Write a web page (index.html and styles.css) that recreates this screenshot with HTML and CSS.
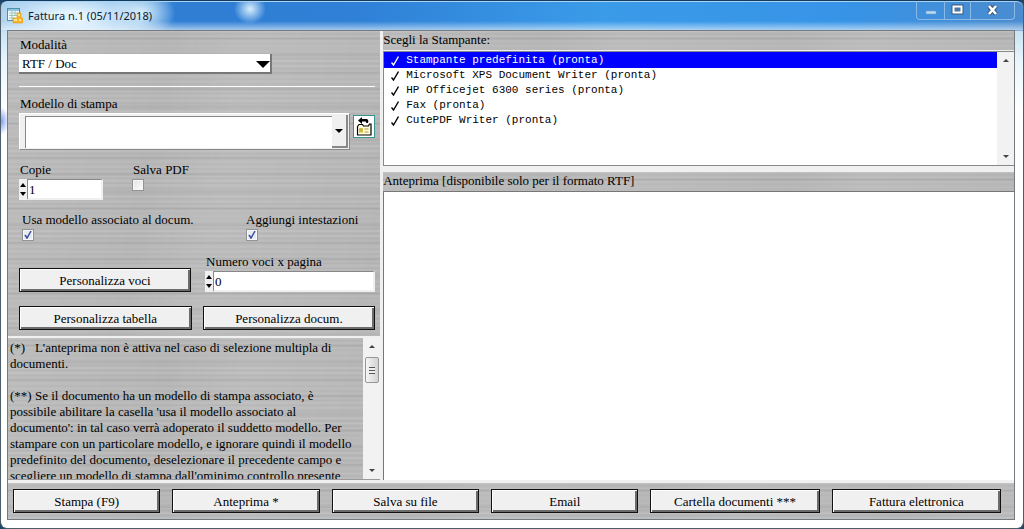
FILE: index.html
```html
<!DOCTYPE html>
<html lang="it">
<head>
<meta charset="utf-8">
<title>Fattura n.1 (05/11/2018)</title>
<link rel="stylesheet" href="styles.css">
</head>
<body>
<div class="window">
  <header class="titlebar">
    <svg class="app-icon" width="16" height="16" viewBox="0 0 16 16" aria-hidden="true">
      <rect x="0.500" y="0.500" width="12" height="12" fill="#f6fcff" stroke="#4d8fae"/>
      <path d="M1 2h11" stroke="#8fc4dc" stroke-width="2"/>
      <path d="M2 5h9M2 7.500h8M2 10h6M5 3v9M8 3v5" stroke="#9cc4b8"/>
      <path d="M10 5h4v5h2v5H6v-5h4z" fill="#f5b62c" stroke="#e39a20" stroke-width=".6"/>
      <path d="M11 6h2v2h-2zM7 11h3v2H7zM12 11h2v2h-2z" fill="#ffe48a"/>
    </svg>
    <h1 class="title">Fattura n.1 (05/11/2018)</h1>
    <div class="win-buttons">
      <button class="win-btn" aria-label="Riduci a icona"><svg width="27" height="18" viewBox="0 0 27 18"><rect x="9" y="10" width="10" height="3" fill="#b9d9f3" stroke="#6d9cc8" stroke-width=".5"/></svg></button>
      <button class="win-btn" aria-label="Ingrandisci"><svg width="25" height="18" viewBox="0 0 25 18"><rect x="8.500" y="5.500" width="8" height="6" fill="#5d7fa6" stroke="#3d5878" stroke-width="4"/><rect x="8.500" y="5.500" width="8" height="6" fill="#4a76a8" stroke="#fff" stroke-width="2"/></svg></button>
      <button class="win-btn win-close" aria-label="Chiudi"><svg width="43" height="18" viewBox="0 0 43 18"><path d="M18 5l7 8M25 5l-7 8" stroke="#3d5878" stroke-width="4.500"/><path d="M18 5l7 8M25 5l-7 8" stroke="#fff" stroke-width="2.600"/></svg></button>
    </div>
  </header>

  <main class="client">
    <div class="panes">
      <div class="left">
        <form class="options metal">
          <div class="field">
            <label for="mode">Modalità</label>
            <span class="mode-box"><select id="mode" class="mode"><option>RTF / Doc</option></select></span>
          </div>
          <hr class="rule">
          <div class="field model-field">
            <label for="model">Modello di stampa</label>
            <div class="model-row">
              <span class="model-box"><select id="model" class="model"><option></option></select><span class="drop" aria-hidden="true"></span></span>
              <button type="button" class="tool" aria-label="Apri modello">
                <svg width="20" height="20" viewBox="0 0 20 20" aria-hidden="true">
                  <path d="M4 3.500L8 0v2h5q2 1 1 4h-2q1-2-1-1.500H8v2.500z" fill="#000"/>
                  <path d="M3.500 9.500l1.500-2h3.500l1 1.500h5l1-2h1.500v11h-13.500z" fill="#fffce0" stroke="#000" stroke-width="1.200"/>
                  <path d="M5 11h4v5H5z" fill="#efe070"/>
                  <path d="M6 15v-3h2v3M10.500 12h4M10.500 15h4" fill="none" stroke="#b5a02c" stroke-width="1.200"/>
                </svg>
              </button>
            </div>
          </div>
          <div class="pair copies">
            <div class="field">
              <label for="copies">Copie</label>
              <div class="spin">
                <span class="spin-buttons"><button type="button" class="up" aria-label="Aumenta copie"></button><button type="button" class="down" aria-label="Diminuisci copie"></button></span>
                <input id="copies" type="text" inputmode="numeric" value="1">
              </div>
            </div>
            <div class="field">
              <label for="pdf">Salva PDF</label>
              <input id="pdf" class="check" type="checkbox">
            </div>
          </div>
          <div class="pair flags">
            <div class="field">
              <label for="assoc">Usa modello associato al docum.</label>
              <input id="assoc" class="check" type="checkbox" checked>
            </div>
            <div class="field">
              <label for="heads">Aggiungi intestazioni</label>
              <input id="heads" class="check" type="checkbox" checked>
            </div>
          </div>
          <div class="pair actions">
            <button type="button" class="btn">Personalizza voci</button>
            <div class="field">
              <label for="rows">Numero voci x pagina</label>
              <div class="spin">
                <span class="spin-buttons"><button type="button" class="up" aria-label="Aumenta voci"></button><button type="button" class="down" aria-label="Diminuisci voci"></button></span>
                <input id="rows" type="text" inputmode="numeric" value="0">
              </div>
            </div>
          </div>
          <div class="pair custom">
            <button type="button" class="btn">Personalizza tabella</button>
            <button type="button" class="btn">Personalizza docum.</button>
          </div>
        </form>

        <section class="info metal">
          <div class="info-text">
            <p>(*) &nbsp; L'anteprima non è attiva nel caso di selezione multipla di<br>documenti.</p>
            <p>(**) Se il documento ha un modello di stampa associato, è<br>possibile abilitare la casella 'usa il modello associato al<br>documento': in tal caso verrà adoperato il suddetto modello. Per<br>stampare con un particolare modello, e ignorare quindi il modello<br>predefinito del documento, deselezionare il precedente campo e<br>scegliere un modello di stampa dall'ominimo controllo presente</p>
          </div>
          <div class="scrollbar" aria-hidden="true"><i class="arrow-up"></i><i class="thumb"></i><i class="arrow-down"></i></div>
        </section>
      </div>

      <div class="right">
        <h2 class="caption metal" id="printers">Scegli la Stampante:</h2>
        <div class="printers">
          <ul class="list" role="listbox" aria-labelledby="printers">
            <li role="option" aria-selected="true" class="selected"><svg width="8" height="10" viewBox="0 0 8 10"><path d="M.500 6.500L2.500 9 7.500.500" /></svg>Stampante predefinita (pronta)</li>
            <li role="option"><svg width="8" height="10" viewBox="0 0 8 10"><path d="M.500 6.500L2.500 9 7.500.500" /></svg>Microsoft XPS Document Writer (pronta)</li>
            <li role="option"><svg width="8" height="10" viewBox="0 0 8 10"><path d="M.500 6.500L2.500 9 7.500.500" /></svg>HP Officejet 6300 series (pronta)</li>
            <li role="option"><svg width="8" height="10" viewBox="0 0 8 10"><path d="M.500 6.500L2.500 9 7.500.500" /></svg>Fax (pronta)</li>
            <li role="option"><svg width="8" height="10" viewBox="0 0 8 10"><path d="M.500 6.500L2.500 9 7.500.500" /></svg>CutePDF Writer (pronta)</li>
          </ul>
          <div class="scrollbar" aria-hidden="true"><i class="arrow-up"></i><i class="arrow-down"></i></div>
        </div>
        <h2 class="caption metal">Anteprima [disponibile solo per il formato RTF]</h2>
        <div class="preview"></div>
      </div>
    </div>

    <footer class="toolbar metal">
      <button class="btn">Stampa (F9)</button>
      <button class="btn">Anteprima *</button>
      <button class="btn">Salva su file</button>
      <button class="btn">Email</button>
      <button class="btn">Cartella documenti ***</button>
      <button class="btn">Fattura elettronica</button>
    </footer>
  </main>
</div>
</body>
</html>
```
FILE: styles.css
```css
* { box-sizing: border-box; }

body {
  margin: 0;
  background: #1d4668;
  font: 13px/16px "Liberation Serif", "Times New Roman", serif;
  color: #000;
}

button, input, select { font: inherit; color: inherit; margin: 0; padding: 0; border-radius: 0; }

.window {
  display: flex;
  flex-direction: column;
  height: 100vh;
  padding: 0 8px 8px 6px;
  border: 1px solid #4c5c68;
  border-top-color: #143a5c;
  border-radius: 7px;
  box-shadow: inset 0 1px 0 #a9d3f5;
  background:
    linear-gradient(#0000 20px, #ffffff90 29px, #0000 30px),
    radial-gradient(ellipse 16px 15px at 249px 8px, #d8eefc, #0000),
    radial-gradient(ellipse 34px 24px at 140px 12px, #d9eefb, #0000),
    radial-gradient(ellipse 80px 26px at 70px 16px, #e4f4ff 20%, #0000),
    linear-gradient(90deg, #a6cdec 0, #8cc0ea 120px, #2f7ed4 175px, #2f80d6 350px, #3a9be9 600px, #3793e6 850px, #4a8cd0 100%) 0 0 / 100% 30px no-repeat,
    radial-gradient(ellipse 8px 14px at 0 120px, #7d9cf5, #0000),
    linear-gradient(#a9cdea, #e9f6fd 60px, #fff 110px, #fff);
}

.titlebar { display: flex; align-items: center; height: 29px; flex: none; }
.app-icon { flex: none; margin-right: 5px; }
.title { flex: 1; margin: 0; font: 11px/16px "Noto Sans", "Open Sans", sans-serif; color: #10202c; }
.win-buttons {
  display: flex;
  align-self: flex-start;
  border: 1px solid #8bb9e4;
  border-top: 0;
  border-radius: 0 0 4px 4px;
}
.win-btn { display: flex; height: 18px; border: 0; background: none; border-right: 1px solid #8bb9e4; }
.win-close { border-right: 0; }

.metal {
  background:
    repeating-linear-gradient(#ffffff10 0 1px, #0000 2px 6px, #0000000c 7px 8px, #0000 9px 12px, #ffffff14 13px, #0000 14px 17px),
    repeating-linear-gradient(100deg, #ffffff0c 0, #0000 90px, #00000004 160px, #ffffff0c 240px),
    repeating-linear-gradient(#bcbcbc 0 1px, #b4b4b4 2px 3px, #bababa 4px 5px);
}

.client {
  flex: 1;
  min-height: 0;
  display: flex;
  flex-direction: column;
  border: 1px solid #737b80;
  background: #f0f0f0;
}
.panes { flex: 1; min-height: 0; display: grid; grid-template-columns: 37% minmax(0, 1fr); gap: 3px; }
.left, .right { display: flex; flex-direction: column; min-height: 0; }

.options { flex: none; display: flex; flex-direction: column; padding: 5px 5px 6px 11px; }
.field { display: flex; flex-direction: column; align-items: flex-start; gap: 1px; }
.field label { padding-left: 1px; line-height: 17px; }
.rule { width: 100%; height: 1px; margin: 12px 0 8px; border: 0; background: #fafafa; }

.mode-box { position: relative; display: block; width: 71%; height: 20px; }
.mode-box::after {
  content: "";
  position: absolute;
  right: 2px;
  top: 7px;
  border: 7px solid transparent;
  border-top-color: #000;
  border-bottom: 0;
  pointer-events: none;
}
.mode {
  appearance: none;
  display: block;
  width: 100%;
  height: 20px;
  padding: 1px 3px 0;
  background: #fff;
  border: solid #777;
  border-width: 0 2px 2px 0;
}

.model-row { display: flex; gap: 3px; width: 100%; }
.model-box {
  position: relative;
  flex: 1;
  display: block;
  height: 37px;
  padding: 2px 1px 2px 5px;
  background: #f0f0f0;
  border: 1px solid #fff;
  border-right-color: #888;
  border-bottom-color: #888;
}
.model { appearance: none; display: block; width: 100%; height: 32px; background: #fff; border: solid #888; border-width: 1px 0 0 1px; }
.drop {
  position: absolute;
  right: 1px;
  top: 1px;
  bottom: 1px;
  width: 16px;
  background: #f0f0f0;
  border: solid #888;
  border-width: 0 2px 2px 0;
  pointer-events: none;
  display: grid;
  place-items: center;
}
.drop::after { content: ""; border: 4px solid transparent; border-top-color: #000; border-bottom: 0; }
.tool { width: 22px; height: 23px; margin: 2px 0; background: #fff; border: 1px solid #389490; display: grid; place-items: center; }

.pair { display: grid; }
.copies { grid-template-columns: 84px auto; justify-content: start; column-gap: 29px; margin-top: 11px; }
.flags { grid-template-columns: 224px 1fr; margin-top: 11px; padding-left: 3px; }
.flags .field label { padding: 0; }
.actions { grid-template-columns: 172px 1fr; column-gap: 14px; align-items: end; margin-top: 12px; }
.actions .field { align-items: stretch; }
.custom { grid-template-columns: 1fr 1fr; column-gap: 11px; margin-top: 14px; }

.spin { display: flex; width: 100%; height: 21px; }
.spin-buttons { display: flex; flex-direction: column; justify-content: space-between; width: 8px; background: #f0f0f0; padding: 2px 1px; }
.spin-buttons button { width: 6px; height: 8px; border: 0; background: none; display: grid; place-items: center; }
.spin-buttons button::after { content: ""; border: 3px solid transparent; }
.spin-buttons .up::after { border-bottom: 4px solid #000; border-top: 0; }
.spin-buttons .down::after { border-top: 4px solid #000; border-bottom: 0; }
.spin input { flex: 1; width: 0; padding: 1px 1px 0; background: #fff; border: 2px solid #f0f0f0; border-top: 1px solid #888; border-left: 1px solid #888; }

.check {
  appearance: none;
  width: 12px;
  height: 12px;
  background: linear-gradient(135deg, #dfe2e6, #fff);
  border: 1px solid #949494;
  box-shadow: inset 0 0 0 1px #f6f6f6;
}
.check:checked {
  background: url("data:image/svg+xml,%3Csvg xmlns='http://www.w3.org/2000/svg' viewBox='0 0 10 10'%3E%3Cpath d='M2 5l2 3 4-7' fill='none' stroke='%233b4c9b' stroke-width='1.5'/%3E%3C/svg%3E") center / 10px 10px no-repeat, #e6ebf4;
}

.btn {
  height: 24px;
  min-width: 0;
  padding-top: 2px;
  background: #f0f0f0;
  border: 1px solid #111;
  box-shadow: inset 1px 1px 0 #fff, inset -2px -2px 0 #6c6c6c;
  white-space: nowrap;
}

.info { flex: 1; min-height: 0; display: flex; margin-top: 2px; border-bottom: 1px solid #999; }
.info-text { flex: 1; min-width: 0; overflow: hidden; padding: 2px 0 0 2px; white-space: nowrap; }
.info p { margin: 0 0 16px; }

.scrollbar { display: flex; flex-direction: column; align-items: center; width: 17px; flex: none; background: #f2f2f2; padding: 7px 0; }
.arrow-up, .arrow-down { border: 3px solid transparent; }
.arrow-up { border-bottom-color: #444; border-top: 0; }
.arrow-down { border-top-color: #444; border-bottom: 0; margin-top: auto; }
.thumb {
  width: 14px;
  height: 26px;
  margin-top: 9px;
  border: 1px solid #979797;
  border-radius: 2px;
  background:
    repeating-linear-gradient(#555 0 1px, #eee 1px 3px) center / 6px 7px no-repeat,
    linear-gradient(90deg, #f5f5f5, #d2d2d2);
}

.caption { flex: none; margin: 0; padding: 1px 0 2px; font: inherit; }
.printers { flex: none; display: flex; height: 115px; margin: 1px 0 6px; background: #fff; border: 1px solid #888; border-right: 0; }
.list { flex: 1; margin: 0; padding: 0; list-style: none; font: 11px/15px "Liberation Mono", "Courier New", monospace; }
.list li { display: flex; align-items: center; gap: 7px; padding-left: 7px; white-space: nowrap; }
.list svg { fill: none; stroke: #000; stroke-width: 1.400; }
.list .selected { padding-top: 1px; background: #00f; color: #fff; }
.list .selected svg { stroke: #fff; }
.preview { flex: 1; background: #fff; border: solid #777; border-width: 1px 0 0 1px; }

.toolbar {
  flex: none;
  display: grid;
  grid-template-columns: repeat(4, 148fr) repeat(2, 170fr);
  column-gap: 12px;
  margin-top: 3px;
  padding: 6px 13px 6px 5px;
}
```
